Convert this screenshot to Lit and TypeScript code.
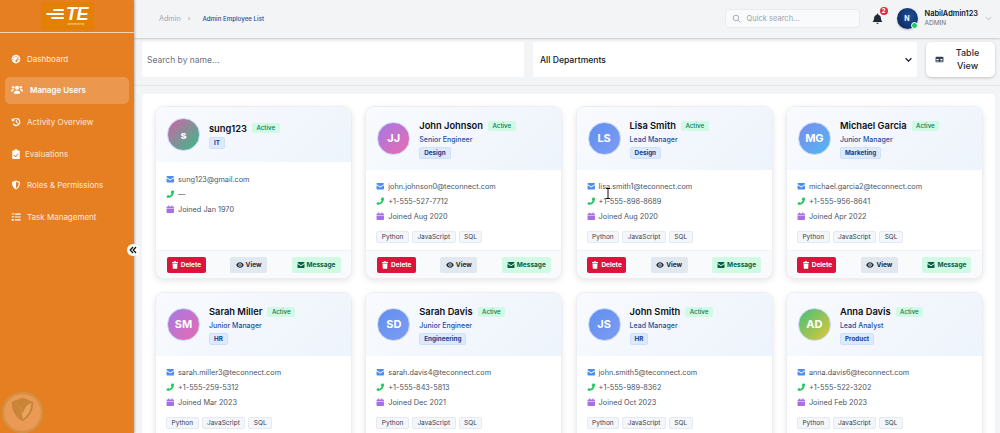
import { LitElement, html, css, svg } from "lit";
import { customElement } from "lit/decorators.js";

const I = {
  envelope: svg`<path d="M1 3.500A1.500 1.500 0 0 1 2.500 2h11A1.500 1.500 0 0 1 15 3.500V4L8 8.500 1 4zM1 6l7 4.500L15 6v6.500a1.500 1.500 0 0 1-1.500 1.500h-11A1.500 1.500 0 0 1 1 12.500z"/>`,
  phone: svg`<path d="M15 1.500c.6 7.800-5.200 13.600-13 13.300L.8 11.300l3.900-1.800 1.400 1.800c2.100-1 3.700-2.700 4.600-4.800L8.800 5l1.900-4.200z"/>`,
  cal: svg`<path d="M4 1h2v2h4V1h2v2h1.500A1.500 1.500 0 0 1 15 4.500V6H1V4.500A1.500 1.500 0 0 1 2.500 3H4zM1 7h14v6.500a1.500 1.500 0 0 1-1.500 1.500h-11A1.500 1.500 0 0 1 1 13.500z"/>`,
  trash: svg`<path d="M6 .5h4l.7 1.500H14v2H2V2h3.300zM3 5h10l-.7 10.500H3.700z"/>`,
  eye: svg`<path fill-rule="evenodd" d="M8 2.500c3.500 0 6.300 2.500 7.500 5.500-1.200 3-4 5.500-7.500 5.500S1.700 11 .5 8C1.700 5 4.500 2.500 8 2.500zm0 2a3.500 3.500 0 1 0 0 7 3.500 3.500 0 0 0 0-7zm0 1.800a1.700 1.700 0 1 1 0 3.400 1.700 1.700 0 0 1 0-3.400z"/>`,
  gauge: svg`<path fill-rule="evenodd" d="M8 1a7 7 0 1 1 0 14A7 7 0 0 1 8 1zM8 2.800a1 1 0 1 0 0 2 1 1 0 0 0 0-2zM4.500 4.300a1 1 0 1 0 0 2 1 1 0 0 0 0-2zM3.200 7.800a1 1 0 1 0 0 2 1 1 0 0 0 0-2zM12.800 7.800a1 1 0 1 0 0 2 1 1 0 0 0 0-2zM11.300 4l-2.500 5a1.800 1.800 0 1 0 1.300.6l2.300-5z"/>`,
  users: svg`<circle cx="8" cy="5" r="2.600"/><circle cx="2.900" cy="4.200" r="1.700"/><circle cx="13.100" cy="4.200" r="1.700"/><path d="M3.800 13c0-3 1.700-4.500 4.200-4.500s4.200 1.500 4.200 4.500zM0 10c0-2 1-3.500 2.800-3.500.6 0 1.100.1 1.500.4C3.200 7.800 2.700 8.800 2.500 10zM16 10c0-2-1-3.500-2.800-3.500-.6 0-1.100.1-1.500.4 1.100.9 1.600 1.900 1.800 3.100z"/>`,
  history: svg`<path d="M8.500 1.500A6.500 6.500 0 1 1 2.700 11l1.700-1A4.500 4.500 0 1 0 4.500 5L6.200 6.700H1.200V1.700l1.900 1.900A6.500 6.500 0 0 1 8.500 1.500zM7.700 4.500h1.600v3.200l2.100 1.300-.8 1.300-2.900-1.800z"/>`,
  clip: svg`<path fill-rule="evenodd" d="M5.500 2.500a2.500 2.500 0 0 1 5 0H13a1 1 0 0 1 1 1V15a1 1 0 0 1-1 1H3a1 1 0 0 1-1-1V3.500a1 1 0 0 1 1-1zM11 7.500l-3.700 3.700L5 9l-1 1 3.300 3.300L12 8.500z"/>`,
  shield: svg`<path fill-rule="evenodd" d="M8 .8l6.500 2.400c0 5.500-1.800 9.900-6.500 12-4.700-2.100-6.500-6.500-6.500-12zM8 3v10.400c3-1.700 4.300-4.600 4.500-8.900z"/>`,
  tasks: svg`<path d="M6 2.500h9.500v1.800H6zM6 7.100h9.500v1.800H6zM6 11.700h9.500v1.800H6zM1 2.800l.9-.9.8.8L4 1.300l.9.9-2.200 2.300zM1 7.400l.9-.9.8.8L4 5.900l.9.900-2.200 2.300zM1.200 11.200h3v2.800h-3z"/>`,
  bell: svg`<path d="M8 .8a1.100 1.100 0 0 1 1.100 1.100v.6c2.300.5 3.900 2.500 3.900 4.800 0 2.700.7 3.800 1.800 5v.9H1.200v-.9C2.300 11.100 3 10 3 7.300c0-2.300 1.600-4.300 3.900-4.800v-.6A1.100 1.100 0 0 1 8 .800zM6.300 14h3.400a1.700 1.700 0 0 1-3.400 0z"/>`,
  table: svg`<path fill-rule="evenodd" d="M2.500 3h11A1.500 1.500 0 0 1 15 4.500v7a1.500 1.500 0 0 1-1.500 1.500h-11A1.500 1.500 0 0 1 1 11.500v-7A1.500 1.500 0 0 1 2.500 3zM2.500 7v1.800h4V7zm7 0v1.800h4V7zM2.500 10v1.500h4V10zm7 0v1.500h4V10z"/>`,
};
const icon = (p: unknown, cls = "") => html`<svg class="ic ${cls}" viewBox="0 0 16 16" fill="currentColor">${p}</svg>`;

const AV = {
  mix: "linear-gradient(135deg,#d263a8,#35bd86)",
  pp: "linear-gradient(135deg,#a678e6,#e86bb0)",
  bl: "linear-gradient(135deg,#5f8ff0,#7f9cf2)",
  bc: "linear-gradient(135deg,#7a8cf0,#50b8f0)",
  gy: "linear-gradient(135deg,#45c07a,#e0c838)",
};

interface P { i: string; n: string; r?: string; d: string; e: string; p: string; j: string; a: string; tags: boolean; }
const people: P[] = [
  { i: "s", n: "sung123", d: "IT", e: "sung123@gmail.com", p: "—", j: "Joined Jan 1970", a: AV.mix, tags: false },
  { i: "JJ", n: "John Johnson", r: "Senior Engineer", d: "Design", e: "john.johnson0@teconnect.com", p: "+1-555-527-7712", j: "Joined Aug 2020", a: AV.pp, tags: true },
  { i: "LS", n: "Lisa Smith", r: "Lead Manager", d: "Design", e: "lisa.smith1@teconnect.com", p: "+1-555-898-8689", j: "Joined Aug 2020", a: AV.bl, tags: true },
  { i: "MG", n: "Michael Garcia", r: "Junior Manager", d: "Marketing", e: "michael.garcia2@teconnect.com", p: "+1-555-956-8641", j: "Joined Apr 2022", a: AV.bc, tags: true },
  { i: "SM", n: "Sarah Miller", r: "Junior Manager", d: "HR", e: "sarah.miller3@teconnect.com", p: "+1-555-259-5312", j: "Joined Mar 2023", a: AV.pp, tags: true },
  { i: "SD", n: "Sarah Davis", r: "Junior Engineer", d: "Engineering", e: "sarah.davis4@teconnect.com", p: "+1-555-843-5813", j: "Joined Dec 2021", a: AV.bl, tags: true },
  { i: "JS", n: "John Smith", r: "Lead Manager", d: "HR", e: "john.smith5@teconnect.com", p: "+1-555-989-8362", j: "Joined Oct 2023", a: AV.bl, tags: true },
  { i: "AD", n: "Anna Davis", r: "Lead Analyst", d: "Product", e: "anna.davis6@teconnect.com", p: "+1-555-522-3202", j: "Joined Feb 2023", a: AV.gy, tags: true },
];

const nav = [
  { l: "Dashboard", ic: I.gauge },
  { l: "Manage Users", ic: I.users, active: true },
  { l: "Activity Overview", ic: I.history },
  { l: "Evaluations", ic: I.clip, tight: true },
  { l: "Roles & Permissions", ic: I.shield },
  { l: "Task Management", ic: I.tasks },
];

@customElement("app-root")
export class AppRoot extends LitElement {
  static styles = css`
    :host { display: block; width: 1000px; height: 433px; overflow: hidden; position: relative; font-family: Inter, "Liberation Sans", sans-serif; background: #f3f4f6; color: #111827; }
    * { box-sizing: border-box; }
    .ic { width: 1em; height: 1em; flex: none; display: block; }
    .app { display: flex; height: 433px; }
    .side { width: 134px; flex: none; background: #e67e22; color: #fff; box-shadow: 1px 0 2px rgba(0,0,0,.25); display: flex; flex-direction: column; z-index: 2; }
    .brand { height: 33px; flex: none; border-bottom: 1px solid #f6d3ae; display: flex; justify-content: center; padding-top: 2px; }
    .logo { width: 53px; height: 28px; background: #e38106; display: flex; align-items: center; justify-content: center; gap: 2px; position: relative; padding-bottom: 4px; }
    .stripes { display: flex; flex-direction: column; align-items: flex-end; gap: 2px; width: 18px; }
    .stripes i { display: block; height: 2px; background: #fff; border-radius: 1px; }
    .te { font: italic 700 18px/16px "Liberation Sans", sans-serif; color: #fff; letter-spacing: -.5px; }
    .logo small { position: absolute; right: 9px; bottom: 4px; font-size: 3px; line-height: 3px; color: #ffe7cc; }
    .menu { display: flex; flex-direction: column; padding: 12px 5px 0; gap: 4.700px; }
    .item { height: 27px; display: flex; align-items: center; gap: 6px; padding-left: 6px; font-size: 8px; border-radius: 5px; color: #fbeadb; }
    .item .ic { font-size: 10px; color: #fff; }
    .item.tight { gap: 4px; }
    .item.active { background: rgba(255,255,255,.2); color: #fff; font-weight: 600; gap: 7px; }
    .item.active .ic { font-size: 12px; }
    .main { flex: 1; min-width: 0; display: flex; flex-direction: column; }
    .top { height: 38px; flex: none; background: #f3f4f6; box-shadow: 0 1px 2px rgba(0,0,0,.18); display: flex; align-items: center; padding: 0 8px 2px 25px; position: relative; z-index: 1; }
    .crumb { font-size: 7.200px; color: #9ca3af; display: flex; align-items: center; gap: 7px; }
    .crumb b { font-weight: 500; font-size: 6.200px; color: #1e4e9c; margin-left: 5px; }
    .sp { flex: 1; }
    .quick { width: 135px; height: 19px; background: #f9fafb; border: 1px solid #e9ebef; border-radius: 4px; display: flex; align-items: center; gap: 6px; padding-left: 6px; font-size: 7.500px; color: #9ca3af; }
    .quick svg { width: 9px; height: 9px; }
    .bell { margin-left: 12px; position: relative; font-size: 11px; color: #1f2937; width: 11px; }
    .bell span { position: absolute; top: -6px; right: -5px; width: 8px; height: 8px; border-radius: 50%; background: #dc2f3c; color: #fff; font-size: 6px; line-height: 8px; text-align: center; font-weight: 700; }
    .av { margin-left: 14px; width: 21px; height: 21px; border-radius: 50%; background: radial-gradient(circle at 60% 40%, #1e4f9c, #0b1f4f); color: #fff; font-size: 7px; font-weight: 700; display: flex; align-items: center; justify-content: center; position: relative; box-shadow: 0 1px 2px rgba(0,0,0,.25); }
    .av::after { content: ""; position: absolute; right: 0; bottom: 0; width: 5px; height: 5px; border-radius: 50%; background: #22c55e; border: 1px solid #fff; }
    .who { margin-left: 7px; display: flex; flex-direction: column; font-size: 7.400px; font-weight: 600; line-height: 9.500px; }
    .who small { font-size: 6.500px; font-weight: 400; color: #6b7280; line-height: 8px; }
    .chev { margin-left: 7px; width: 7px; height: 7px; color: #9ca3af; }
    .filters { display: flex; gap: 9px; padding: 4px 5px 0 8px; height: 48px; flex: none; border-bottom: 1px solid #e5e7eb; margin-bottom: 8px; align-items: flex-start; }
    .field { flex: 1; height: 35px; background: #fff; border-radius: 2px; display: flex; align-items: center; padding-left: 5px; font-size: 8.500px; color: #6b7280; }
    .field.sel { color: #111827; font-weight: 500; position: relative; font-size: 8.600px; padding-left: 7px; }
    .field.sel svg { position: absolute; right: 5px; top: 15px; width: 7px; height: 6px; color: #111827; }
    .tv { width: 69px; height: 35px; flex: none; background: #fff; border-radius: 5px; box-shadow: 0 1px 3px rgba(0,0,0,.2); display: flex; align-items: center; padding-left: 9px; gap: 7px; font-size: 9px; font-weight: 500; color: #1f2937; line-height: 12.500px; }
    .tv .ic { font-size: 9px; color: #374151; }
    .tv span { text-align: center; flex: 1; padding-right: 11px; }
    .panel { margin: 0 5px 0 8px; background: #fff; border-radius: 4px 4px 0 0; padding: 12px 13px 0; flex: 1; min-height: 0; overflow: hidden; }
    .grid { display: grid; grid-template-columns: repeat(4, 197px); column-gap: 13.300px; row-gap: 13px; }
    .card { height: 173px; border-radius: 9px; border: 1px solid #eceef2; background: #fff; box-shadow: 0 2px 6px rgba(0,0,0,.1); overflow: hidden; display: flex; flex-direction: column; }
    .ch { background: linear-gradient(135deg,#f8fafe,#eef4fc); padding: 11px; display: flex; align-items: center; gap: 9px; }
    .pic { width: 33px; height: 33px; border-radius: 50%; flex: none; color: #fff; font-weight: 700; font-size: 11px; display: flex; align-items: center; justify-content: center; border: 1px solid #c7d6f4; }
    .info { margin-top: 1px; }
    .nm { display: flex; align-items: center; gap: 5px; font-size: 9.300px; font-weight: 600; color: #0b0f19; line-height: 13px; white-space: nowrap; }
    .act { font-size: 6.200px; font-weight: 500; background: #d1fae5; color: #047857; padding: 0 4.500px; border-radius: 2px; line-height: 10px; }
    .rl { font-size: 7px; color: #1e4e9c; line-height: 10px; margin-top: 2.500px; font-weight: 500; }
    .dp { display: block; width: fit-content; font-size: 6.300px; font-weight: 700; background: #dbeafe; color: #1e3a8a; padding: 0 4px; border-radius: 2px; line-height: 10px; margin-top: 2px; border: 1px solid #cfe0f7; }
    .cb { flex: 1; padding: 9.500px 10px 0; display: flex; flex-direction: column; }
    .r { display: flex; align-items: center; gap: 3.500px; height: 15px; font-size: 7.300px; color: #4b5563; white-space: nowrap; }
    .r .ic { font-size: 8.500px; }
    .em { color: #4f8ef0; } .ph { color: #22c55e; } .ca { color: #a86ee6; }
    .tags { display: flex; gap: 3px; margin-top: 6.500px; }
    .tags span { font-size: 6.500px; line-height: 10px; padding: 0 4.500px; background: #f3f6fb; border: 1px solid #e5e9f0; border-radius: 2px; color: #374151; }
    .cf { height: 28px; flex: none; background: #f8fafc; border-top: 1px solid #f1f3f6; display: flex; align-items: center; justify-content: space-between; padding: 1px 10.500px 0; }
    .b { height: 16px; display: flex; align-items: center; gap: 2px; font-size: 6.500px; font-weight: 700; border-radius: 2px; }
    .b .ic { font-size: 8px; }
    .del { background: #dc143c; color: #fff; width: 39px; justify-content: center; }
    .vw { background: #e2e8f0; color: #1f2937; width: 37px; justify-content: center; }
    .ms { background: #d1fae5; color: #065f46; width: 49px; justify-content: center; }
    .toggle { position: absolute; left: 127px; top: 244px; width: 12px; height: 12px; border-radius: 50%; background: #fff; display: flex; align-items: center; justify-content: center; z-index: 5; }
    .toggle svg { width: 8px; height: 8px; }
    .mark { position: absolute; left: 1px; top: 391px; width: 43px; height: 43px; z-index: 5; }
    .beam { position: absolute; left: 605px; top: 188px; width: 6px; height: 11px; z-index: 5; }
  `;

  private card(p: P) {
    return html`<div class="card">
      <div class="ch">
        <div class="pic" style="background:${p.a}">${p.i}</div>
        <div class="info">
          <div class="nm">${p.n}<span class="act">Active</span></div>
          ${p.r ? html`<div class="rl">${p.r}</div>` : ""}
          <span class="dp">${p.d}</span>
        </div>
      </div>
      <div class="cb">
        <div class="r">${icon(I.envelope, "em")}${p.e}</div>
        <div class="r">${icon(I.phone, "ph")}${p.p}</div>
        <div class="r">${icon(I.cal, "ca")}${p.j}</div>
        ${p.tags ? html`<div class="tags"><span>Python</span><span>JavaScript</span><span>SQL</span></div>` : ""}
      </div>
      <div class="cf">
        <div class="b del">${icon(I.trash)}Delete</div>
        <div class="b vw">${icon(I.eye)}View</div>
        <div class="b ms">${icon(I.envelope)}Message</div>
      </div>
    </div>`;
  }

  render() {
    return html`<div class="app">
      <aside class="side">
        <div class="brand"><div class="logo">
          <div class="stripes"><i style="width:11px"></i><i style="width:18px"></i><i style="width:13px"></i></div>
          <span class="te">TE</span><small>connectivity</small>
        </div></div>
        <nav class="menu">
          ${nav.map((n) => html`<div class="item ${n.active ? "active" : ""} ${n.tight ? "tight" : ""}">${icon(n.ic)}${n.l}</div>`)}
        </nav>
      </aside>
      <main class="main">
        <header class="top">
          <div class="crumb">Admin<span>›</span><b>Admin Employee List</b></div>
          <div class="sp"></div>
          <div class="quick"><svg viewBox="0 0 16 16" fill="none" stroke="currentColor" stroke-width="1.600"><circle cx="7" cy="7" r="5"/><path d="M11 11l4 4"/></svg>Quick search...</div>
          <div class="bell">${icon(I.bell)}<span>2</span></div>
          <div class="av">N</div>
          <div class="who">NabilAdmin123<small>ADMIN</small></div>
          <svg class="chev" viewBox="0 0 16 16" fill="none" stroke="currentColor" stroke-width="1.600"><path d="M2 5l6 6 6-6"/></svg>
        </header>
        <section class="filters">
          <div class="field">Search by name...</div>
          <div class="field sel">All Departments<svg viewBox="0 0 12 8" fill="none" stroke="currentColor" stroke-width="2"><path d="M1 1l5 5 5-5"/></svg></div>
          <div class="tv">${icon(I.table)}<span>Table View</span></div>
        </section>
        <section class="panel"><div class="grid">${people.map((p) => this.card(p))}</div></section>
      </main>
    </div>
    <div class="toggle"><svg viewBox="0 0 16 16" fill="none" stroke="#111" stroke-width="2.600"><path d="M8 2L2.500 8 8 14M14 2L8.500 8l5.500 6"/></svg></div>
    <svg class="mark" viewBox="0 0 44 44">
      <circle cx="22" cy="22" r="20" fill="#eb9a55" stroke="#d4913f" stroke-width="2.500"/>
      <path d="M22 7l11 4c0 9-3 15-11 20-8-5-11-11-11-20z" fill="#c98437"/>
      <path d="M14 12c5 3 8 8 8 17 6-4 9-10 9-17l-5 3-4 8c-1-5-4-9-8-11z" fill="#e9a35c"/>
    </svg>
    <svg class="beam" viewBox="0 0 6 11" fill="none" stroke="#111" stroke-width="1"><path d="M1 .5h4M3 .5v10M1 10.500h4"/></svg>`;
  }
}
